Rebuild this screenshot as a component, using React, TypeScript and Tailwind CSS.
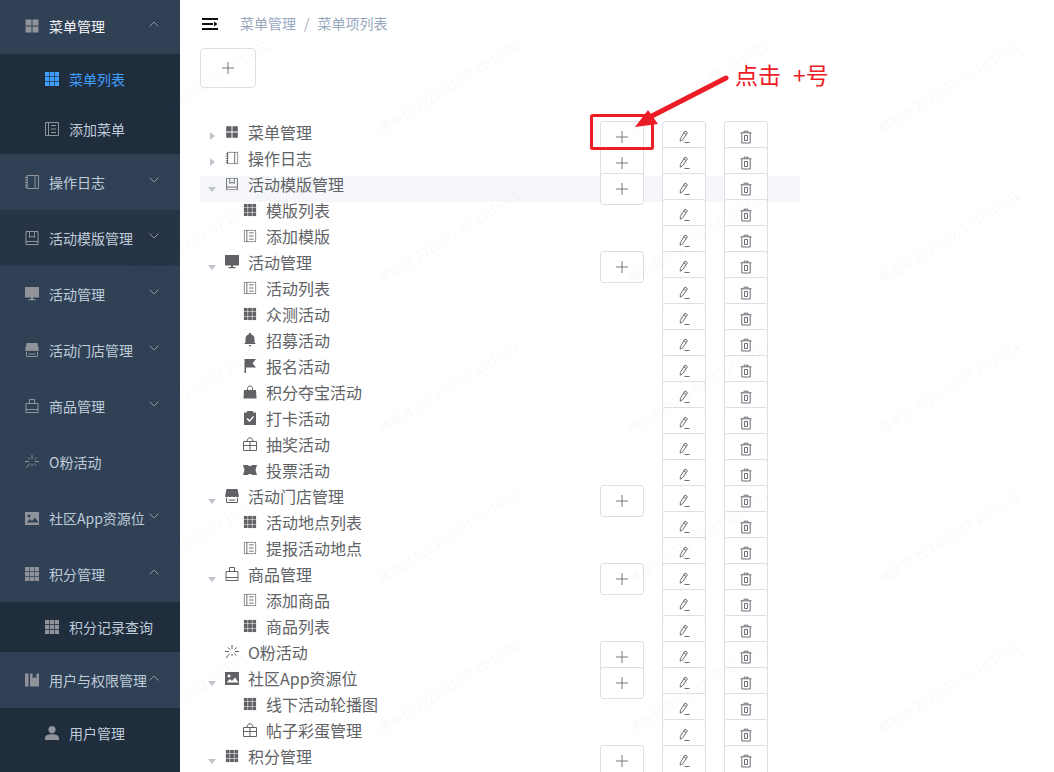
import type { ReactNode } from "react";

type IconName =
  | "grid4" | "grid9" | "doc" | "notebook" | "book" | "monitor" | "store" | "bag"
  | "spark" | "image" | "bookmarks" | "user" | "bell" | "flag" | "lockbag"
  | "clipboard" | "gift" | "ticket";

const ICONS: Record<IconName, ReactNode> = {
  grid4: (
    <path d="M0.500 0.500h6v6h-6zM7.500 0.500h6v6h-6zM0.500 7.500h6v6h-6zM7.500 7.500h6v6h-6z" fill="currentColor" />
  ),
  grid9: (
    <path
      d="M0 0h4.300v4.300H0zM4.900 0h4.200v4.300H4.900zM9.700 0H14v4.300H9.700zM0 4.900h4.300v4.200H0zM4.900 4.900h4.200v4.200H4.900zM9.700 4.900H14v4.200H9.700zM0 9.700h4.300V14H0zM4.900 9.700h4.200V14H4.900zM9.700 9.700H14V14H9.700z"
      fill="currentColor"
    />
  ),
  doc: (
    <path
      d="M0.500 0.500h13v13H0.500zM3.500 0.500v13M6 3.500h5M6 7h5M6 10.500h5"
      fill="none"
      stroke="currentColor"
    />
  ),
  notebook: (
    <path
      d="M2 0.500h11.500v13H2zM10 0.500v13M0 2.500h3M0 5h3M0 7.500h3M0 10h3M0 12h3"
      fill="none"
      stroke="currentColor"
    />
  ),
  book: (
    <path
      d="M1 0.500h12v13H1zM1 10.500h12M4.500 0.500v6l2.500-1.500 2.500 1.500v-6"
      fill="none"
      stroke="currentColor"
    />
  ),
  monitor: (
    <path d="M0 0h14v10.500H0zM3.500 12h7v1.200h-7zM6 10.500h2V12H6z" fill="currentColor" />
  ),
  store: (
    <>
      <path d="M1.500 0h11L14 7.500c-1.200 1-2.400 .8-3.400 0-1 .8-2.400 .8-3.600 0-1.200 .8-2.600 .8-3.600 0-1 .8-2.200 1-3.400 0z" fill="currentColor" />
      <path d="M1.500 9v4.500h11V9M3.500 11h7" fill="none" stroke="currentColor" />
    </>
  ),
  bag: (
    <path
      d="M1 4.500h12v9H1zM1 10.500h12M4.500 4.500V0.500h5v4"
      fill="none"
      stroke="currentColor"
    />
  ),
  spark: (
    <path
      d="M7 0v4M7 9v2M3 2.500l2 2.200M11.500 2.500L9.500 4.500M0 6.500h4M10 6.500h4M4.800 8.500L1 13M9.500 8.500L11 10.500"
      fill="none"
      stroke="currentColor"
    />
  ),
  image: (
    <path
      fillRule="evenodd"
      d="M0 1h15v13H0zM1.500 11.500h12L10 6.500 7 10 5 8zM4 3.500a1.500 1.500 0 1 0 .01 0z"
      fill="currentColor"
    />
  ),
  bookmarks: (
    <path
      d="M0 0.500h3.500v13H0zM5 0.500h2.500v5l2-1.500 2 1.500v-5H14v13H5z"
      fill="currentColor"
    />
  ),
  user: (
    <path
      d="M7 0a3.700 3.700 0 1 1-.01 0zM0 14v-2c0-2.500 2.500-3.800 7-3.800s7 1.300 7 3.800v2z"
      fill="currentColor"
    />
  ),
  bell: (
    <path
      d="M6 0h2v1.200c2.400.6 3.500 2.400 3.500 4.800v3.500L13 11H1l1.500-1.500V6c0-2.400 1.100-4.200 3.500-4.800zM5.500 12h3L7 13.800z"
      fill="currentColor"
    />
  ),
  flag: <path d="M1.500 0H13L9.500 4.200 13 8.500H3V14H1.500z" fill="currentColor" />,
  lockbag: (
    <>
      <path d="M1 5H13L13.500 13.500H0.500z" fill="currentColor" />
      <path d="M4.500 7V3.500C4.500 2 5.500 1 7 1s2.500 1 2.500 2.500V7" fill="none" stroke="currentColor" />
    </>
  ),
  clipboard: (
    <path
      fillRule="evenodd"
      d="M1 1.500h3V0h6v1.500h3V14H1zM3.500 8l3 3 4.500-5-1-1-3.500 4-2-2z"
      fill="currentColor"
    />
  ),
  gift: (
    <path
      d="M0.500 4.500h13v9h-13zM0.500 8.500h13M7 4.500v9M4 4.500c0-5 6-5 6 0"
      fill="none"
      stroke="currentColor"
    />
  ),
  ticket: (
    <path
      d="M0 2h5c.3.700 1 1 2 1s1.700-.3 2-1h5l-1.500 5 1.500 5H9c-.3-.7-1-1-2-1s-1.700.3-2 1H0l1.500-5z"
      fill="currentColor"
    />
  ),
};

// these read a little smaller in the tree than in the sidebar
const TREE_SMALL: IconName[] = ["grid4", "grid9", "doc", "notebook", "book"];

function Icon({ name, className }: { name: IconName; className?: string }) {
  return (
    <svg viewBox="0 0 14 14" className={`w-[14px] h-[14px] shrink-0 ${className ?? ""}`}>
      {ICONS[name]}
    </svg>
  );
}

type SideItem = {
  name: string;
  icon: IconName;
  sub?: boolean;
  chevron?: "up" | "down";
  active?: boolean;
  bright?: boolean;
  hover?: boolean;
};

const SIDE: SideItem[] = [
  { name: "菜单管理", icon: "grid4", chevron: "up", bright: true },
  { name: "菜单列表", icon: "grid9", sub: true, active: true },
  { name: "添加菜单", icon: "doc", sub: true },
  { name: "操作日志", icon: "notebook", chevron: "down" },
  { name: "活动模版管理", icon: "book", chevron: "down", hover: true },
  { name: "活动管理", icon: "monitor", chevron: "down" },
  { name: "活动门店管理", icon: "store", chevron: "down" },
  { name: "商品管理", icon: "bag", chevron: "down" },
  { name: "O粉活动", icon: "spark" },
  { name: "社区App资源位", icon: "image", chevron: "down" },
  { name: "积分管理", icon: "grid9", chevron: "up" },
  { name: "积分记录查询", icon: "grid9", sub: true },
  { name: "用户与权限管理", icon: "bookmarks", chevron: "up" },
  { name: "用户管理", icon: "user", sub: true },
];

type TreeRow = {
  name: string;
  icon: IconName;
  top?: boolean;
  arrow?: "right" | "down";
  hover?: boolean;
};

const TREE: TreeRow[] = [
  { name: "菜单管理", icon: "grid4", top: true, arrow: "right" },
  { name: "操作日志", icon: "notebook", top: true, arrow: "right" },
  { name: "活动模版管理", icon: "book", top: true, arrow: "down", hover: true },
  { name: "模版列表", icon: "grid9" },
  { name: "添加模版", icon: "doc" },
  { name: "活动管理", icon: "monitor", top: true, arrow: "down" },
  { name: "活动列表", icon: "doc" },
  { name: "众测活动", icon: "grid9" },
  { name: "招募活动", icon: "bell" },
  { name: "报名活动", icon: "flag" },
  { name: "积分夺宝活动", icon: "lockbag" },
  { name: "打卡活动", icon: "clipboard" },
  { name: "抽奖活动", icon: "gift" },
  { name: "投票活动", icon: "ticket" },
  { name: "活动门店管理", icon: "store", top: true, arrow: "down" },
  { name: "活动地点列表", icon: "grid9" },
  { name: "提报活动地点", icon: "doc" },
  { name: "商品管理", icon: "bag", top: true, arrow: "down" },
  { name: "添加商品", icon: "doc" },
  { name: "商品列表", icon: "grid9" },
  { name: "O粉活动", icon: "spark", top: true },
  { name: "社区App资源位", icon: "image", top: true, arrow: "down" },
  { name: "线下活动轮播图", icon: "grid9" },
  { name: "帖子彩蛋管理", icon: "gift" },
  { name: "积分管理", icon: "grid9", top: true, arrow: "down" },
];

function Sidebar() {
  return (
    <aside className="w-[180px] h-full shrink-0 bg-[#1f2d3d] overflow-hidden text-sm">
      <div className="-mt-[2px]">
        {SIDE.map((item) => (
          <div
            key={item.name + (item.sub ? "-sub" : "")}
            className={`relative flex items-center ${
              item.sub
                ? "h-[50px] pl-[45px] bg-[#1f2d3d]"
                : `h-[56px] pl-[25px] ${item.hover ? "bg-[#263445]" : "bg-[#304156]"}`
            } ${item.active ? "text-[#409eff]" : item.bright ? "text-[#f4f4f5]" : "text-[#bfcbd9]"}`}
          >
            <Icon name={item.icon} className={item.active ? "text-[#409eff]" : "text-[#909399]"} />
            <span className="ml-[10px] whitespace-nowrap">{item.name}</span>
            {item.chevron && (
              <svg viewBox="0 0 10 6" className="absolute left-[149px] top-[23px] w-[10px] h-[6px] text-[#909399]">
                <path
                  d={item.chevron === "up" ? "M0.500 5.500L5 1l4.500 4.500" : "M0.500 0.500L5 5l4.500-4.500"}
                  fill="none"
                  stroke="currentColor"
                />
              </svg>
            )}
          </div>
        ))}
      </div>
    </aside>
  );
}

function ActionButton({ children, className }: { children?: ReactNode; className?: string }) {
  return (
    <div
      className={`w-[44px] h-[32px] shrink-0 flex items-center justify-center bg-white border border-[#dcdfe6] rounded-[3px] text-[#6c6e74] ${className ?? ""}`}
    >
      {children}
    </div>
  );
}

function PlusGlyph() {
  return (
    <svg viewBox="0 0 12 12" className="w-[12px] h-[12px] text-[#77797f]">
      <path d="M6 0v12M0 6h12" stroke="currentColor" fill="none" strokeWidth="1" />
    </svg>
  );
}

function EditGlyph() {
  return (
    <svg viewBox="0 0 14 14" className="w-[14px] h-[14px]">
      <path
        d="M8 1l2.500 1.700-4.800 7-2.500 1.500.2-2.800zM6.800 2.800l2.500 1.700M7.500 12.500h5"
        fill="none"
        stroke="currentColor"
        strokeWidth="1"
      />
    </svg>
  );
}

function TrashGlyph() {
  return (
    <svg viewBox="0 0 14 14" className="w-[14px] h-[14px]">
      <path
        d="M1.500 2.800h11M5 2.800V1.200h4v1.600M2.800 2.800v10.200h8.400V2.800M5.500 5.500h3v5h-3z"
        fill="none"
        stroke="currentColor"
        strokeWidth="1"
      />
    </svg>
  );
}

function TreeItem({ row }: { row: TreeRow }) {
  return (
    <div className={`flex items-start h-[26px] ${row.hover ? "bg-[#f5f7fa]" : ""}`}>
      <div className={`w-[400px] shrink-0 flex items-center h-[16px] ${row.top ? "pl-[25px]" : "pl-[43px]"}`}>
        {row.arrow === "right" && (
          <span className="absolute left-[210px] mt-[8px] w-0 h-0 border-y-[4px] border-y-transparent border-l-[5px] border-l-[#c0c4cc]" />
        )}
        {row.arrow === "down" && (
          <span className="absolute left-[208px] mt-[10px] w-0 h-0 border-x-[4px] border-x-transparent border-t-[5px] border-t-[#c0c4cc]" />
        )}
        <Icon
          name={row.icon}
          className={`text-[#606266] ${TREE_SMALL.includes(row.icon) ? "scale-[.9]" : ""}`}
        />
        <span className="ml-[9px] text-base leading-[16px] text-[#606266] whitespace-nowrap -mt-px">{row.name}</span>
      </div>
      <div className="flex -mt-[3px] w-[168px] shrink-0">
        <div className="w-[62px] shrink-0">
          {row.top && (
            <ActionButton>
              <PlusGlyph />
            </ActionButton>
          )}
        </div>
        <ActionButton className="mr-[18px]">
          <EditGlyph />
        </ActionButton>
        <ActionButton>
          <TrashGlyph />
        </ActionButton>
      </div>
    </div>
  );
}

function Annotation() {
  return (
    <>
      <svg className="absolute left-0 top-0 w-[1054px] h-[772px] pointer-events-none">
        <rect x="591.500" y="115.500" width="61" height="33" fill="none" stroke="#ee1c25" strokeWidth="3" rx="1" />
        <path d="M726 78L648 118" stroke="#ee1c25" strokeWidth="5" strokeLinecap="round" fill="none" />
        <path d="M635 127L648 110L658 124z" fill="#ee1c25" />
      </svg>
      <div className="absolute left-[735px] top-[58px] text-[23px] leading-[32px] text-[#ee1c25] whitespace-nowrap">
        点击<span className="ml-[12px]">+号</span>
      </div>
    </>
  );
}

function Watermarks() {
  const cells = Array.from({ length: 30 });
  return (
    <div className="absolute left-[-176px] top-[-138px] grid grid-cols-[repeat(5,250px)] auto-rows-[150px] pointer-events-none">
      {cells.map((_, i) => (
        <div key={i} className="flex items-center justify-center">
          <span className="-rotate-[32deg] text-[13px] text-black/[.045] whitespace-nowrap">
            傅朋良 2023/02/07 10:16:21
          </span>
        </div>
      ))}
    </div>
  );
}

export default function App() {
  return (
    <div className="relative w-full h-screen overflow-hidden flex bg-white font-['Noto_Sans_CJK_SC','Liberation_Sans',sans-serif]">
      <Sidebar />
      <main className="flex-1 min-w-0 overflow-hidden">
        <header className="flex items-center h-[48px] pl-[22px]">
          <svg viewBox="0 0 16 12" className="w-[16px] h-[12px] text-[#111]">
            <path d="M0 0h16v2H0zM0 5h11v2H0zM0 10h16v2H0zM12 3.500L15.500 6 12 8.500z" fill="currentColor" />
          </svg>
          <nav className="ml-[22px] text-sm text-[#97a8be] flex items-center -mt-[3px]">
            <span>菜单管理</span>
            <span className="mx-[8px] text-[#a0aec0]">/</span>
            <span>菜单项列表</span>
          </nav>
        </header>
        <div className="pl-[20px]">
          <div className="w-[56px] h-[40px] flex items-center justify-center border border-[#dcdfe6] rounded">
            <PlusGlyph />
          </div>
          <div className="mt-[36px] w-[600px]">
            {TREE.map((row) => (
              <TreeItem key={row.name + row.icon + (row.top ? "t" : "c")} row={row} />
            ))}
          </div>
        </div>
      </main>
      <Annotation />
      <Watermarks />
    </div>
  );
}
